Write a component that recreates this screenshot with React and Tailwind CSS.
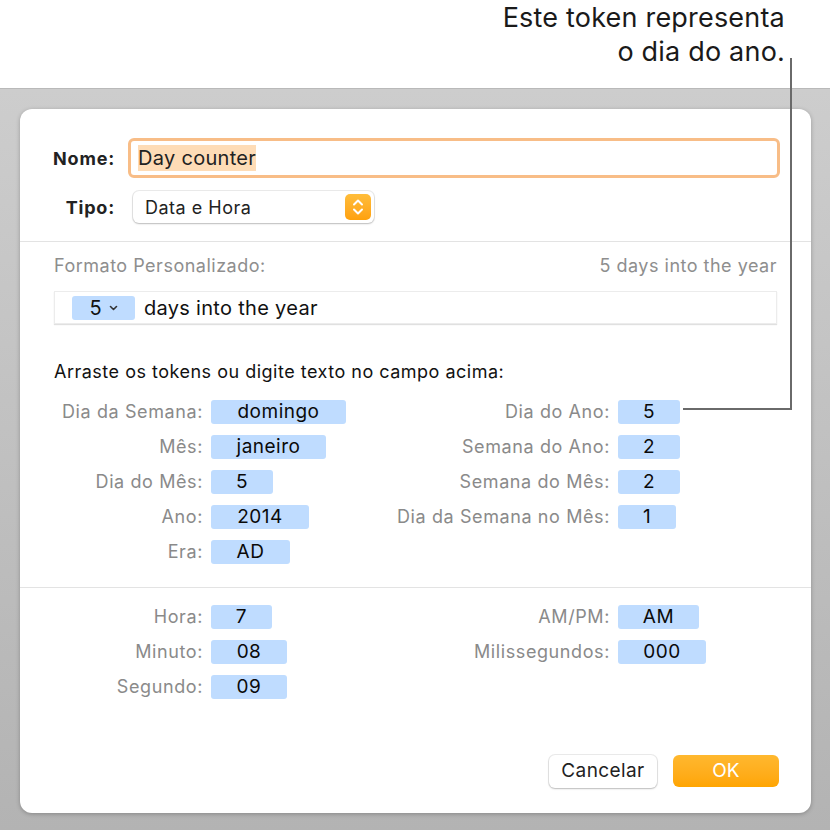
import React from "react";

const font = { fontFamily: "Inter, 'Noto Sans', sans-serif" };

const dateLeft = [
  { label: "Dia da Semana:", value: "domingo", w: "w-[135px]" },
  { label: "Mês:", value: "janeiro", w: "w-[115px]" },
  { label: "Dia do Mês:", value: "5", w: "w-[62px]" },
  { label: "Ano:", value: "2014", w: "w-[98px]" },
  { label: "Era:", value: "AD", w: "w-[79px]" },
];

const dateRight = [
  { label: "Dia do Ano:", value: "5", w: "w-[62px]" },
  { label: "Semana do Ano:", value: "2", w: "w-[62px]" },
  { label: "Semana do Mês:", value: "2", w: "w-[62px]" },
  { label: "Dia da Semana no Mês:", value: "1", w: "w-[58px]" },
];

const timeLeft = [
  { label: "Hora:", value: "7", w: "w-[61px]" },
  { label: "Minuto:", value: "08", w: "w-[76px]" },
  { label: "Segundo:", value: "09", w: "w-[76px]" },
];

const timeRight = [
  { label: "AM/PM:", value: "AM", w: "w-[81px]" },
  { label: "Milissegundos:", value: "000", w: "w-[88px]" },
];

const Token = ({ value, w }) => (
  <div className={`${w} h-6 rounded-[3px] bg-[#bfdcff] text-[#0a0a0a] text-[19px] tracking-[0.5px] leading-6 text-center`}>
    {value}
  </div>
);

const Row = ({ label, value, w, labelW }) => (
  <div className="flex items-center gap-2 h-6">
    <div className={`${labelW} text-right text-[18px] tracking-[0.6px] text-[#8a8a8a] leading-6 whitespace-nowrap`}>{label}</div>
    <Token value={value} w={w} />
  </div>
);

const TokenColumns = ({ left, right }) => (
  <div className="flex pl-[34px]">
    <div className="w-[306px] flex flex-col gap-[11px]">
      {left.map((r) => (
        <Row key={r.label} {...r} labelW="w-[149px]" />
      ))}
    </div>
    <div className="flex flex-col gap-[11px]">
      {right.map((r) => (
        <Row key={r.label} {...r} labelW="w-[250px]" />
      ))}
    </div>
  </div>
);

const Stepper = () => (
  <div className="w-[26px] h-[26px] rounded-[5px] bg-gradient-to-b from-[#ffbd3a] to-[#ffa10a] flex items-center justify-center">
    <svg width="12" height="18" viewBox="0 0 12 18" fill="none">
      <path d="M2 6.5 L6 2.5 L10 6.5" stroke="white" strokeWidth="2" strokeLinecap="round" strokeLinejoin="round" />
      <path d="M2 11.5 L6 15.5 L10 11.5" stroke="white" strokeWidth="2" strokeLinecap="round" strokeLinejoin="round" />
    </svg>
  </div>
);

export default function App() {
  return (
    <div className="relative w-[830px] h-[830px] overflow-hidden bg-white" style={font}>
      {/* Legenda */}
      <div className="h-[88px] pr-[45px] pt-[1px] text-right text-[27px] tracking-[0.2px] leading-[34px] text-[#1a1a1a]">
        <div>Este token representa</div>
        <div>o dia do ano.</div>
      </div>

      {/* Fundo cinza */}
      <div className="h-[742px] bg-gradient-to-b from-[#cdcdcd] to-[#b3b3b3] border-t border-[#b9b9b9] pl-5 pr-[19px] pt-5 pb-[18px]">
        <div className="h-[704px] bg-white rounded-xl shadow-[0_1px_4px_rgba(0,0,0,0.25)] pt-[29px]">
          {/* Nome */}
          <div className="flex items-center pl-[30px] pr-[31px]">
            <div className="w-[65px] text-[18px] tracking-[0.8px] font-bold text-[#222] text-right">Nome:</div>
            <div className="ml-[13px] flex-1 h-10 rounded-md border-[3px] border-[#f8bd87] flex items-center pl-[7px]">
              <span className="bg-[#fedcb6] text-[20px] tracking-[0.3px] leading-[26px] text-[#222]">Day counter</span>
            </div>
          </div>

          {/* Tipo */}
          <div className="flex items-center mt-[13px] pl-[30px]">
            <div className="w-[65px] text-[18px] tracking-[0.8px] font-bold text-[#222] text-right">Tipo:</div>
            <div className="ml-[18px] w-[241px] h-8 rounded-md bg-white shadow-[0_0_0_1px_rgba(0,0,0,0.08),0_1px_2px_rgba(0,0,0,0.2)] flex items-center justify-between pl-3 pr-[3px]">
              <span className="text-[18px] tracking-[0.5px] text-[#222]">Data e Hora</span>
              <Stepper />
            </div>
          </div>

          <div className="mt-[18px] h-px bg-[#e3e3e3]" />

          {/* Formato */}
          <div className="mt-[13px] px-[34px] flex justify-between text-[18px] tracking-[0.5px] leading-[22px] text-[#8e8e8e]">
            <span>Formato Personalizado:</span>
            <span>5 days into the year</span>
          </div>
          <div className="mt-[14px] mx-[34px] h-[33px] bg-white border border-[#ececec] shadow-[0_1px_1px_rgba(0,0,0,0.12)] flex items-center pl-[17px]">
            <div className="w-[63px] h-6 rounded-[3px] bg-[#bfdcff] flex items-center justify-center gap-[7px] text-[20px] text-[#111]">
              <span>5</span>
              <svg width="9" height="6" viewBox="0 0 9 6" fill="none">
                <path d="M1.5 1.5 L4.5 4.5 L7.5 1.5" stroke="#333" strokeWidth="1.6" strokeLinecap="round" strokeLinejoin="round" />
              </svg>
            </div>
            <span className="ml-[9px] text-[20px] tracking-[0.3px] text-[#111]">days into the year</span>
          </div>

          <div className="mt-[37px] px-[34px] text-[18px] tracking-[0.5px] leading-[22px] text-[#111]">
            Arraste os tokens ou digite texto no campo acima:
          </div>

          <div className="mt-[17px]">
            <TokenColumns left={dateLeft} right={dateRight} />
          </div>

          <div className="mt-[23px] h-px bg-[#e3e3e3]" />

          <div className="mt-[17px]">
            <TokenColumns left={timeLeft} right={timeRight} />
          </div>

          {/* Botões */}
          <div className="mt-[56px] flex justify-end gap-4 pr-[32px]">
            <button className="w-[108px] h-[33px] rounded-md bg-white shadow-[0_0_0_1px_rgba(0,0,0,0.08),0_1px_2px_rgba(0,0,0,0.2)] text-[19px] tracking-[0.4px] text-[#222]">
              Cancelar
            </button>
            <button className="w-[106px] h-[32px] rounded-md bg-gradient-to-b from-[#ffb82e] to-[#ffa500] text-[19px] text-white">
              OK
            </button>
          </div>
        </div>
      </div>

      {/* Linha da legenda */}
      <svg className="absolute inset-0 pointer-events-none" width="830" height="830">
        <path d="M791 58 V409 H683" stroke="#6a6a6a" strokeWidth="2" fill="none" />
      </svg>
    </div>
  );
}
